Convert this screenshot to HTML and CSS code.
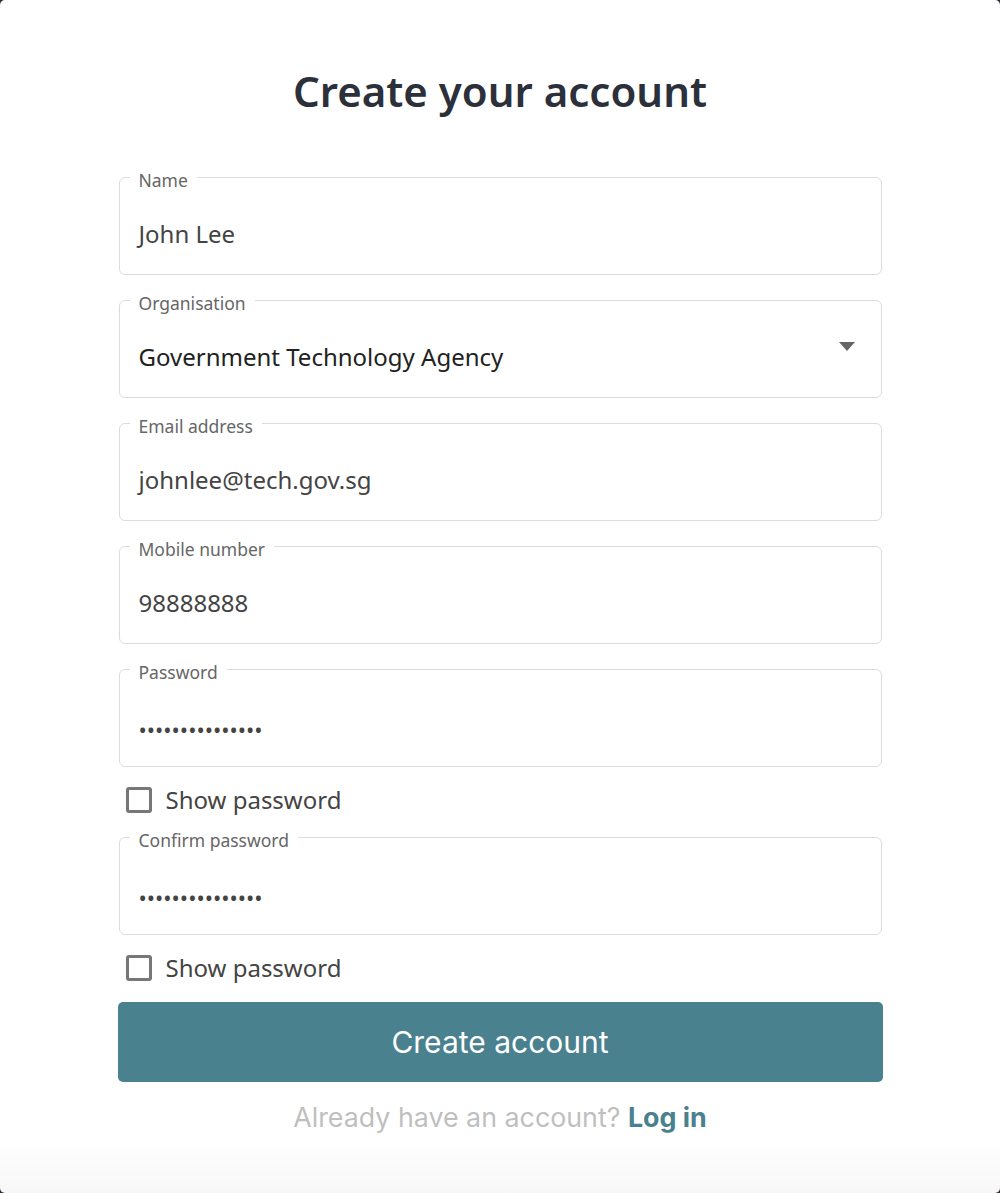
FILE: index.html
```html
<!DOCTYPE html>
<html lang="en">
<head>
<meta charset="utf-8">
<title>Create your account</title>
<link rel="stylesheet" href="styles.css">
</head>
<body>
<div class="card">
  <h1 class="title">Create your account</h1>
  <form class="form">
    <fieldset class="field">
      <legend class="label">Name</legend>
      <div class="value">John Lee</div>
    </fieldset>
    <fieldset class="field">
      <legend class="label">Organisation</legend>
      <div class="value select">
        <span class="select-text">Government Technology Agency</span>
        <span class="caret"></span>
      </div>
    </fieldset>
    <fieldset class="field">
      <legend class="label">Email address</legend>
      <div class="value">johnlee@tech.gov.sg</div>
    </fieldset>
    <fieldset class="field">
      <legend class="label">Mobile number</legend>
      <div class="value">98888888</div>
    </fieldset>
    <fieldset class="field">
      <legend class="label">Password</legend>
      <div class="value dots">•••••••••••••••</div>
    </fieldset>
    <label class="check"><span class="box"></span><span>Show password</span></label>
    <fieldset class="field">
      <legend class="label">Confirm password</legend>
      <div class="value dots">•••••••••••••••</div>
    </fieldset>
    <label class="check"><span class="box"></span><span>Show password</span></label>
    <button type="button" class="submit">Create account</button>
    <p class="login">Already have an account? <a class="login-link">Log in</a></p>
  </form>
</div>
</body>
</html>
```

FILE: styles.css
```css
html, body {
  margin: 0;
  padding: 0;
  height: 100%;
}
body {
  background: #2e3038;
  font-family: "Noto Sans", sans-serif;
}
.card {
  box-sizing: border-box;
  height: 1193px;
  background: linear-gradient(to bottom, #ffffff 0, #ffffff 1140px, #f7f7f7 1193px);
  border-radius: 5px;
  padding-top: 65px;
  display: flex;
  flex-direction: column;
  align-items: center;
}
.title {
  margin: 0 0 47px;
  font-size: 42px;
  line-height: 52px;
  font-weight: 600;
  color: #2c303b;
}
.form {
  width: 763px;
  display: flex;
  flex-direction: column;
}
.field {
  margin: 0 0 12px;
  padding: 0 19px;
  border: 1px solid #dcdcdc;
  border-radius: 6px;
  min-width: 0;
}
.label {
  padding: 7px 9px 0;
  margin-left: -9px;
  font-size: 17.5px;
  line-height: 19px;
  color: #666;
}
.value {
  padding: 29px 0 25px;
  font-size: 24px;
  line-height: 30px;
  color: #444;
}
.select {
  display: flex;
  align-items: center;
  justify-content: space-between;
  color: #222;
}
.caret {
  width: 0;
  height: 0;
  border-left: 8px solid transparent;
  border-right: 8px solid transparent;
  border-top: 9px solid #666;
  margin-right: 7px;
  position: relative;
  top: -11px;
}
.dots {
  padding: 32px 0 22px;
  font-size: 22px;
  color: #444;
}
.check {
  display: flex;
  align-items: center;
  gap: 14px;
  margin: 6px 0 9px 7px;
  font-size: 24px;
  line-height: 30px;
  color: #444;
}
.box {
  box-sizing: border-box;
  width: 26px;
  height: 26px;
  border: 3px solid #777;
  border-radius: 3px;
}
.submit {
  margin: 10px -1px 0;
  height: 80px;
  border: 0;
  border-radius: 5px;
  background: #4a818e;
  color: #fff;
  font-family: Inter, sans-serif;
  font-size: 30px;
  font-weight: 400;
}
.login {
  margin: 19px 0 0;
  text-align: center;
  font-family: Inter, sans-serif;
  font-size: 26.8px;
  line-height: 32px;
  color: #bfbfbf;
}
.login-link {
  color: #4a818e;
  font-weight: 700;
}
```
